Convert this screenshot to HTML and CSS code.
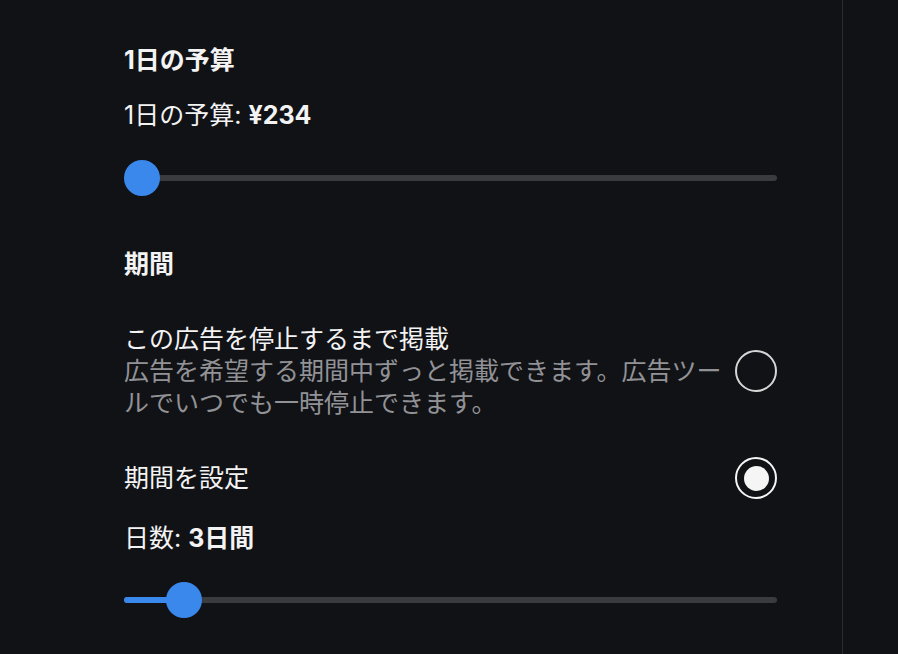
FILE: index.html
```html
<!DOCTYPE html>
<html lang="ja">
<head>
<meta charset="utf-8">
<title>予算と期間</title>
<link rel="stylesheet" href="styles.css">
</head>
<body>
<div class="layout">
  <main class="panel">
    <section class="section budget">
      <h2 class="heading">1日の予算</h2>
      <div class="field">
        <p class="value-label">1日の予算: <strong>¥234</strong></p>
        <div class="slider">
          <div class="track"></div>
          <div class="fill" style="width: 0px"></div>
          <div class="thumb" style="left: 0px"></div>
        </div>
      </div>
    </section>

    <section class="section duration">
      <h2 class="heading">期間</h2>
      <div class="options">
        <div class="option option-long">
          <div class="option-text">
            <div class="option-title">この広告を停止するまで掲載</div>
            <div class="option-desc">広告を希望する期間中ずっと掲載できます。広告ツールでいつでも一時停止できます。</div>
          </div>
          <span class="radio"></span>
        </div>
        <div class="option">
          <div class="option-text">
            <div class="option-title">期間を設定</div>
          </div>
          <span class="radio checked"><span class="dot"></span></span>
        </div>
      </div>
      <div class="field days">
        <p class="value-label">日数: <strong>3日間</strong></p>
        <div class="slider">
          <div class="track"></div>
          <div class="fill" style="width: 60px"></div>
          <div class="thumb" style="left: 42px"></div>
        </div>
      </div>
    </section>
  </main>
  <aside class="side"></aside>
</div>
</body>
</html>
```

FILE: styles.css
```css
* { box-sizing: border-box; }

html, body {
  margin: 0;
  padding: 0;
  background: #111216;
  height: 100%;
}

body {
  font-family: "Inter", "Noto Sans CJK JP", "Noto Sans", sans-serif;
  color: #f3f3f3;
  font-size: 25px;
  line-height: 32px;
  overflow: hidden;
}

.layout {
  display: flex;
  height: 654px;
}

.panel {
  width: 843px;
  border-right: 1px solid #2a2b2e;
  padding: 44px 65px 0 124px;
  display: flex;
  flex-direction: column;
  gap: 52px;
}

.side {
  flex: 1;
}

.section {
  display: flex;
  flex-direction: column;
}

.heading {
  margin: 0;
  font-size: 25px;
  line-height: 32px;
  font-weight: 700;
}

.budget .heading { margin-bottom: 23px; }
.duration .heading { margin-bottom: 43px; }

.field {
  display: flex;
  flex-direction: column;
  gap: 29px;
}

.value-label {
  margin: 0;
  font-weight: 400;
}

.value-label strong { font-weight: 700; }

.slider {
  position: relative;
  height: 36px;
  width: 653px;
}

.track {
  position: absolute;
  left: 0;
  right: 0;
  top: 15px;
  height: 6px;
  border-radius: 3px;
  background: #3a3b3e;
}

.fill {
  position: absolute;
  left: 0;
  top: 15px;
  height: 6px;
  border-radius: 3px;
  background: #3a88ec;
}

.thumb {
  position: absolute;
  top: 0;
  width: 36px;
  height: 36px;
  border-radius: 50%;
  background: #3a88ec;
}

.options {
  display: flex;
  flex-direction: column;
  gap: 38px;
}

.option {
  display: flex;
  align-items: center;
  justify-content: space-between;
  gap: 8px;
}

.option-text {
  flex: 1;
  min-width: 0;
}

.option-title {
  color: #f3f3f3;
}

.option-desc {
  color: #929296;
}

.radio {
  flex: none;
  width: 42px;
  height: 42px;
  border-radius: 50%;
  border: 2px solid #d6d6d6;
  display: flex;
  align-items: center;
  justify-content: center;
}

.radio.checked {
  border-color: #f5f5f5;
}

.dot {
  width: 25px;
  height: 25px;
  border-radius: 50%;
  background: #f5f5f5;
}

.days {
  margin-top: 23px;
  gap: 28px;
}
```
